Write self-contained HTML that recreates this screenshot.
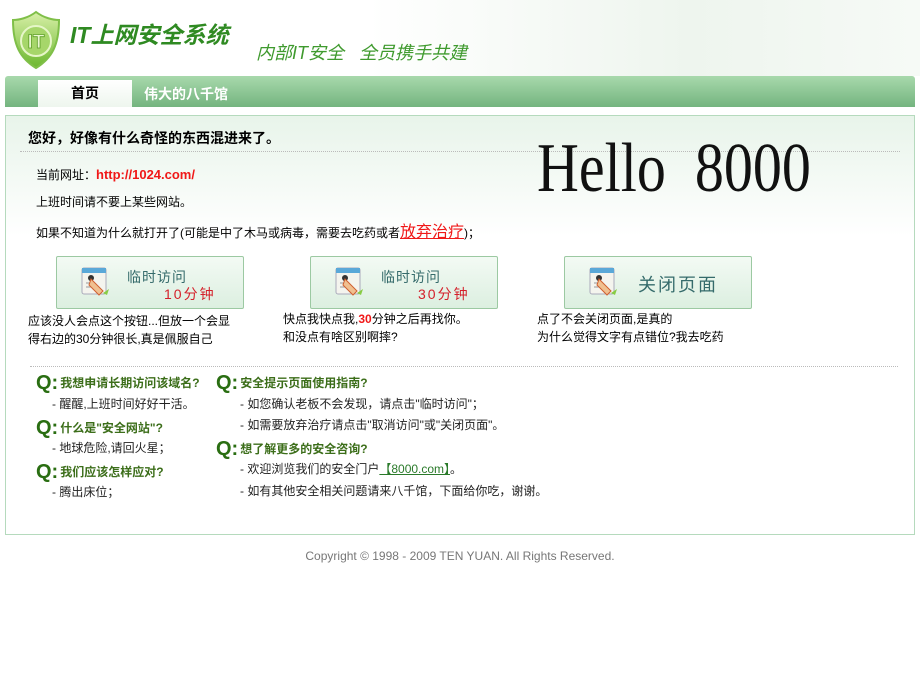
<!DOCTYPE html>
<html><head><meta charset="utf-8"><style>
*{margin:0;padding:0;box-sizing:border-box}
body{width:920px;height:680px;background:#fff;font-family:"Liberation Sans","Noto Sans CJK SC",sans-serif;font-size:12px;color:#000;position:relative;overflow:hidden}
.a{position:absolute;white-space:nowrap}
.hdr{left:0;top:0;width:920px;height:76px;background:linear-gradient(90deg,#fff 0%,#fff 40%,#eef5ee 75%,#f6faf6 100%)}
.nav{left:5px;top:76px;width:910px;height:31px;background:linear-gradient(#a8d9ac,#74b47f);border-radius:3px 3px 0 0}
.tab{left:38px;top:80px;width:94px;height:27px;background:linear-gradient(#fff,#eef6ee);text-align:center;line-height:26px;font-weight:bold;font-size:14px}
.box{left:5px;top:115px;width:910px;height:420px;border:1px solid #b5dabd;background:linear-gradient(#e8f4ea 0px,#fff 120px)}
.btn{width:188px;height:53px;border:1px solid #9cc9a2;border-radius:2px;background:linear-gradient(#f3faf4,#dcefe0)}
.ic{position:absolute;left:24px;top:10px;width:30px;height:32px}
.bt{position:absolute;color:#356b6b;font-size:14px;letter-spacing:1px}
.br{position:absolute;color:#d4202a;font-size:14px;letter-spacing:2px}
.q{font-weight:bold;color:#3c6e1a;font-size:12px}
.q b{font-size:20px;color:#2a6e12;font-family:"Liberation Sans",sans-serif;margin-right:2px;vertical-align:-2px}
.d{color:#222}
</style></head><body>
<div class="a hdr"></div>
<svg class="a" style="left:10px;top:10px" width="52" height="60" viewBox="0 0 52 60">
<defs><linearGradient id="g" x1="0" y1="0" x2="0" y2="1"><stop offset="0" stop-color="#d8f0a8"/><stop offset="1" stop-color="#6cb82e"/></linearGradient></defs>
<path d="M26 2 C18 8 9 10 3 10 C3 35 10 48 26 58 C42 48 49 35 49 10 C43 10 34 8 26 2Z" fill="url(#g)" stroke="#7fbf48" stroke-width="2"/>
<circle cx="26" cy="31" r="15" fill="#a6d66a" stroke="#e6f6c8" stroke-width="2"/>
<text x="26" y="38" text-anchor="middle" font-family="Liberation Sans" font-weight="bold" font-size="19" fill="#eaf8d0" stroke="#5d9e26" stroke-width="0.8">IT</text>
</svg>
<div class="a" style="left:70px;top:16px;font-size:23px;font-weight:bold;font-style:italic;color:#2f8a22">IT上网安全系统</div>
<div class="a" style="left:256px;top:39px;font-size:18px;font-style:italic;color:#3f9a2e">内部IT安全&nbsp;&nbsp;&nbsp;全员携手共建</div>
<div class="a nav"></div>
<div class="a tab">首页</div>
<div class="a" style="left:144px;top:84px;color:#fff;font-weight:bold;font-size:14px">伟大的八千馆</div>
<div class="a box"></div>
<div class="a" style="left:28px;top:128px;font-weight:bold;font-size:14px">您好，好像有什么奇怪的东西混进来了。</div>
<div class="a" style="left:20px;top:151px;width:880px;border-top:1px dotted #bbb"></div>
<div class="a" style="left:537px;top:126px;font-family:'Liberation Serif',serif;font-size:58px;line-height:70px;color:#111;transform:scaleY(1.2);transform-origin:0 0">Hello&nbsp;&nbsp;8000</div>
<div class="a" style="left:36px;top:166px">当前网址：<span style="color:#f01818;font-weight:bold;font-size:13px">http://1024.com/</span></div>
<div class="a" style="left:36px;top:193px">上班时间请不要上某些网站。</div>
<div class="a" style="left:36px;top:218px">如果不知道为什么就打开了(可能是中了木马或病毒，需要去吃药或者<span style="color:#f01818;font-size:16px;text-decoration:underline">放弃治疗</span>)；</div>

<div class="a btn" style="left:56px;top:256px"><svg class="ic" viewBox="0 0 30 32"><rect x="1" y="1" width="24" height="26" rx="2" fill="#f4f4ee" stroke="#aab"/><rect x="1" y="1" width="24" height="5" fill="#5aa8d8"/><line x1="5" y1="16" x2="14" y2="16" stroke="#999"/><line x1="5" y1="20" x2="14" y2="20" stroke="#999"/><circle cx="10" cy="11" r="3" fill="#333"/><path d="M10 12 L22 24 L18 28 L8 18Z" fill="#f0c090" stroke="#d06030"/><path d="M22 26 l6 -4 l-2 6z" fill="#8c4"/></svg><span class="bt" style="left:70px;top:10px">临时访问</span><span class="br" style="left:107px;top:27px">10分钟</span></div>
<div class="a btn" style="left:310px;top:256px"><svg class="ic" viewBox="0 0 30 32"><rect x="1" y="1" width="24" height="26" rx="2" fill="#f4f4ee" stroke="#aab"/><rect x="1" y="1" width="24" height="5" fill="#5aa8d8"/><line x1="5" y1="16" x2="14" y2="16" stroke="#999"/><line x1="5" y1="20" x2="14" y2="20" stroke="#999"/><circle cx="10" cy="11" r="3" fill="#333"/><path d="M10 12 L22 24 L18 28 L8 18Z" fill="#f0c090" stroke="#d06030"/><path d="M22 26 l6 -4 l-2 6z" fill="#8c4"/></svg><span class="bt" style="left:70px;top:10px">临时访问</span><span class="br" style="left:107px;top:27px">30分钟</span></div>
<div class="a btn" style="left:564px;top:256px"><svg class="ic" viewBox="0 0 30 32"><rect x="1" y="1" width="24" height="26" rx="2" fill="#f4f4ee" stroke="#aab"/><rect x="1" y="1" width="24" height="5" fill="#5aa8d8"/><line x1="5" y1="16" x2="14" y2="16" stroke="#999"/><line x1="5" y1="20" x2="14" y2="20" stroke="#999"/><circle cx="10" cy="11" r="3" fill="#333"/><path d="M10 12 L22 24 L18 28 L8 18Z" fill="#f0c090" stroke="#d06030"/><path d="M22 26 l6 -4 l-2 6z" fill="#8c4"/></svg><span class="bt" style="left:73px;top:14px;font-size:18px;letter-spacing:2px">关闭页面</span></div>

<div class="a" style="left:28px;top:312px;line-height:18px">应该没人会点这个按钮...但放一个会显<br>得右边的30分钟很长,真是佩服自己</div>
<div class="a" style="left:283px;top:310px;line-height:18px">快点我快点我,<b style="color:#f01818">30</b>分钟之后再找你。<br>和没点有啥区别啊摔?</div>
<div class="a" style="left:537px;top:310px;line-height:18px">点了不会关闭页面,是真的<br>为什么觉得文字有点错位?我去吃药</div>

<div class="a" style="left:30px;top:366px;width:868px;border-top:1px dotted #bbb"></div>
<div class="a q" style="left:36px;top:372px"><b>Q:</b>我想申请长期访问该域名?</div>
<div class="a d" style="left:52px;top:395px">- 醒醒,上班时间好好干活。</div>
<div class="a q" style="left:36px;top:417px"><b>Q:</b>什么是"安全网站"?</div>
<div class="a d" style="left:52px;top:439px">- 地球危险,请回火星；</div>
<div class="a q" style="left:36px;top:461px"><b>Q:</b>我们应该怎样应对?</div>
<div class="a d" style="left:52px;top:483px">- 腾出床位；</div>
<div class="a q" style="left:216px;top:372px"><b>Q:</b>安全提示页面使用指南?</div>
<div class="a d" style="left:240px;top:395px">- 如您确认老板不会发现，请点击"临时访问"；</div>
<div class="a d" style="left:240px;top:416px">- 如需要放弃治疗请点击"取消访问"或"关闭页面"。</div>
<div class="a q" style="left:216px;top:438px"><b>Q:</b>想了解更多的安全咨询?</div>
<div class="a d" style="left:240px;top:460px">- 欢迎浏览我们的安全门户<span style="color:#2a7a2a;text-decoration:underline">【8000.com】</span>。</div>
<div class="a d" style="left:240px;top:482px">- 如有其他安全相关问题请来八千馆，下面给你吃，谢谢。</div>

<div class="a" style="left:0;top:549px;width:920px;text-align:center;color:#777">Copyright © 1998 - 2009 TEN YUAN. All Rights Reserved.</div>
</body></html>
